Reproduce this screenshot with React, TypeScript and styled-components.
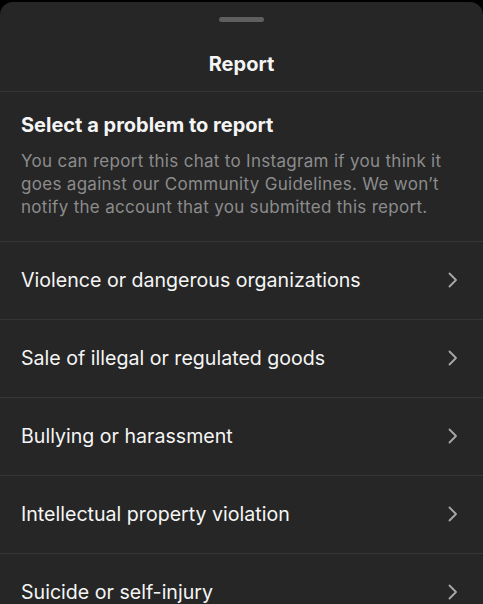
import React from "react";
import styled, { createGlobalStyle } from "styled-components";

const Global = createGlobalStyle`
  html, body { margin: 0; padding: 0; background: #000; }
  body { font-family: Inter, "Noto Sans", Roboto, sans-serif; -webkit-font-smoothing: antialiased; }
  * { box-sizing: border-box; }
`;

const Screen = styled.div`
  width: 483px;
  height: 604px;
  overflow: hidden;
  background: #000;
  display: flex;
  flex-direction: column;
  padding-top: 2px;
`;

const Sheet = styled.div`
  flex: 1;
  background: #262626;
  border-radius: 13px 13px 0 0;
  display: flex;
  flex-direction: column;
`;

const Handle = styled.div`
  align-self: center;
  width: 45px;
  height: 5px;
  border-radius: 3px;
  background: #5f5f5f;
  margin-top: 15px;
`;

const Header = styled.div`
  height: 70px;
  padding: 30px 0 16px;
  display: flex;
  align-items: center;
  justify-content: center;
  border-bottom: 1px solid #363636;
`;

const Title = styled.h1`
  margin: 0;
  font-size: 20px;
  line-height: 24px;
  font-weight: 700;
  color: #f5f5f5;
`;

const Intro = styled.div`
  padding: 21px 21px 22px;
  border-bottom: 1px solid #363636;
`;

const Heading = styled.h2`
  margin: 0 0 13px;
  font-size: 20px;
  font-weight: 700;
  color: #f5f5f5;
  line-height: 24px;
`;

const Desc = styled.p`
  margin: 0;
  font-size: 17px;
  letter-spacing: 0.3px;
  line-height: 23px;
  color: #8c8c8c;
`;

const Row = styled.div`
  height: 78px;
  flex-shrink: 0;
  display: flex;
  align-items: center;
  justify-content: space-between;
  padding: 0 24px 2px 21px;
  border-bottom: 1px solid #363636;
`;

const Label = styled.span`
  font-size: 19.6px;
  color: #f5f5f5;
`;

const Chevron = () => (
  <svg width="12" height="18" viewBox="0 0 12 18" fill="none">
    <path d="M2.5 2.5 L9 9 L2.5 15.5" stroke="#a8a8a8" strokeWidth="1.8" strokeLinecap="round" strokeLinejoin="round" />
  </svg>
);

const items = [
  "Violence or dangerous organizations",
  "Sale of illegal or regulated goods",
  "Bullying or harassment",
  "Intellectual property violation",
  "Suicide or self-injury",
];

export default function App() {
  return (
    <>
      <Global />
      <Screen>
        <Sheet>
          <Handle />
          <Header>
            <Title>Report</Title>
          </Header>
          <Intro>
            <Heading>Select a problem to report</Heading>
            <Desc>
              You can report this chat to Instagram if you think it goes against our Community Guidelines. We won’t notify the account that you submitted this report.
            </Desc>
          </Intro>
          {items.map((t) => (
            <Row key={t}>
              <Label>{t}</Label>
              <Chevron />
            </Row>
          ))}
        </Sheet>
      </Screen>
    </>
  );
}
